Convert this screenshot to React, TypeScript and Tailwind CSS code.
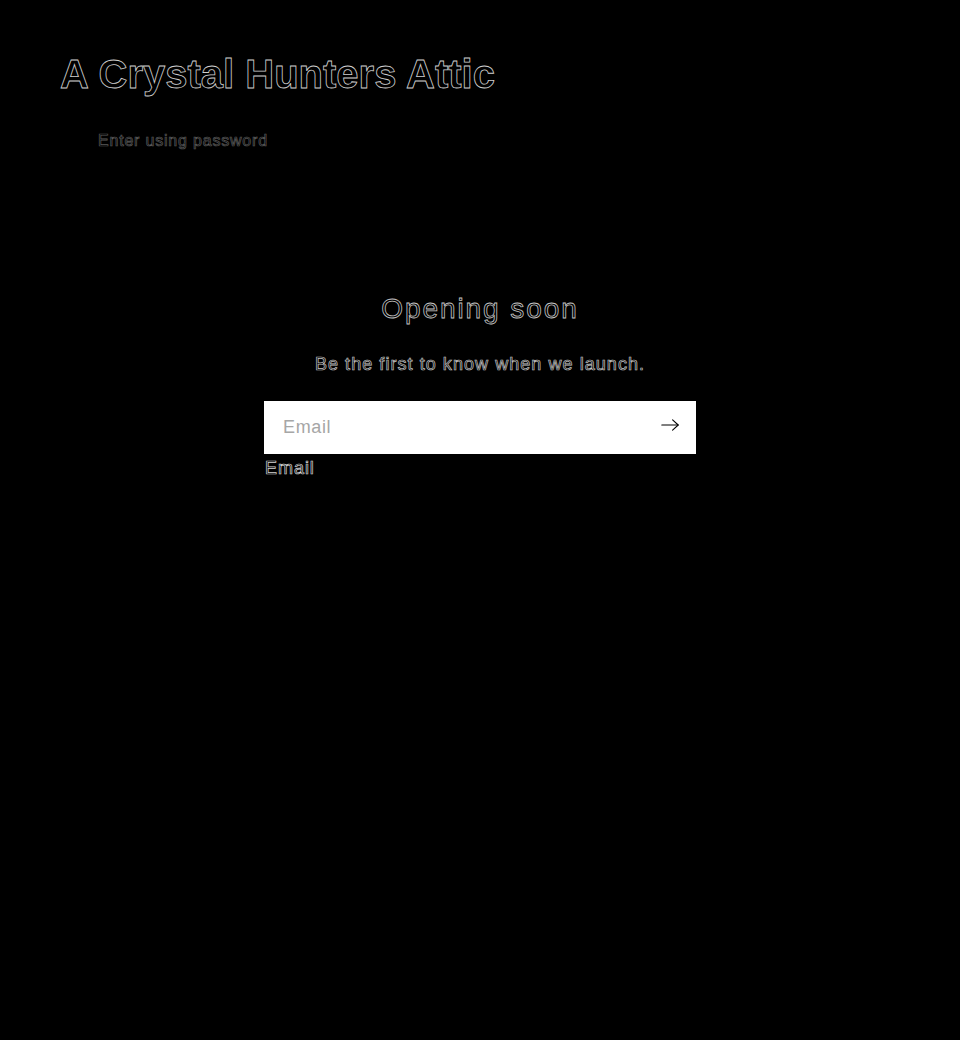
/**
 * Password page — store name, "enter using password" link, centred
 * newsletter block. Text is black with a thin light outline on black.
 */
export default function App() {
  return (
    <div className="min-h-[1040px] bg-black font-['Liberation_Sans',Arial,sans-serif] text-black antialiased">
      {/* Header */}
      <header className="pl-[60px] pt-[50px]">
        <h1 className="text-[40px] font-bold leading-[48px] [-webkit-text-stroke:0.8px_#cfcfcf]">
          A Crystal Hunters Attic
        </h1>
        <button
          type="button"
          className="mt-[31px] ml-[38px] text-[16px] leading-6 tracking-[0.05rem] [-webkit-text-stroke:0.7px_#5a5a5a]"
        >
          Enter using password
        </button>
      </header>

      {/* Newsletter */}
      <main className="mt-[139px] flex flex-col items-center">
        <h2 className="text-[28px] leading-[34px] tracking-[0.12rem] [-webkit-text-stroke:0.8px_#c4c4c4]">
          Opening soon
        </h2>
        <p className="mt-[25px] text-[18px] leading-[27px] tracking-[0.066rem] [-webkit-text-stroke:0.7px_#c4c4c4]">
          Be the first to know when we launch.
        </p>

        <form className="mt-[23px] w-[432px]">
          <div className="flex h-[53px] items-center bg-white">
            <input
              type="email"
              placeholder="Email"
              className="h-full flex-1 bg-transparent pl-[19px] text-[18px] tracking-[0.04rem] text-black outline-none placeholder:text-[#a6a6a6]"
            />
            <button type="button" className="mr-[17px] mb-[5px] flex h-full items-center text-black">
              <svg width="18" height="12" viewBox="0 0 18 12" fill="none" stroke="currentColor" strokeWidth="1.1" strokeLinecap="round">
                <path d="M0.8 6h16.4" />
                <path d="M11.6 0.8L17.2 6l-5.6 5.2" strokeLinejoin="round" />
              </svg>
            </button>
          </div>
          <label className="mt-[1px] block pl-[1px] text-[18px] leading-[27px] tracking-[0.06rem] [-webkit-text-stroke:0.7px_#d4d4d4]">
            Email
          </label>
        </form>
      </main>
    </div>
  );
}
